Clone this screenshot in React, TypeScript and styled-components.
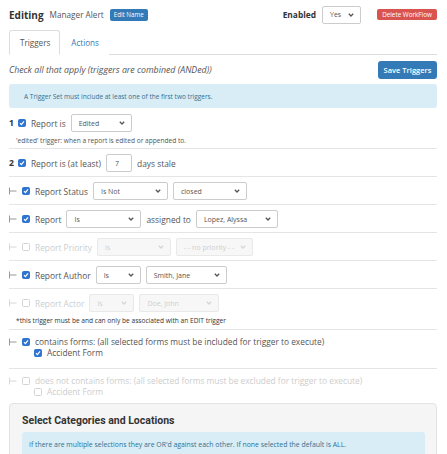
import React from "react";
import styled, { createGlobalStyle } from "styled-components";

const GlobalStyle = createGlobalStyle`
  html, body {
    margin: 0;
    padding: 0;
    background: #fff;
  }
  body {
    font-family: "Open Sans", "Liberation Sans", sans-serif;
    color: #555;
  }
`;

const Page = styled.div`
  padding: 6px 10px 0 9px;
  height: 454px;
  overflow: hidden;
  box-sizing: border-box;
`;

const Header = styled.div`
  display: flex;
  align-items: center;
  height: 17px;
`;

const Title = styled.span`
  font-size: 10px;
  font-weight: 700;
  color: #333;
  margin-right: 6px;
`;

const Subtitle = styled.span`
  font-size: 8.2px;
  color: #555;
  margin-right: 6px;
`;

const Badge = styled.span`
  display: inline-flex;
  align-items: center;
  height: 12px;
  padding: 0 4px;
  background: #337ab7;
  color: #fff;
  font-size: 6.2px;
  border-radius: 2px;
`;

const HeaderRight = styled.div`
  margin-left: auto;
  display: flex;
  align-items: center;
`;

const EnabledLabel = styled.span`
  font-size: 8.4px;
  font-weight: 700;
  color: #333;
  margin-right: 6px;
`;

const DangerButton = styled.button`
  margin-left: 16px;
  height: 11px;
  width: 60px;
  padding: 0;
  border: none;
  border-radius: 2px;
  background: #d9534f;
  color: #fff;
  font-family: inherit;
  font-size: 6.3px;
  line-height: 11px;
`;

const SelectBox = styled.div<{ $w: number; $disabled?: boolean }>`
  box-sizing: border-box;
  width: ${(p) => p.$w}px;
  height: 18px;
  display: flex;
  align-items: center;
  justify-content: space-between;
  padding: 0 6px 0 7px;
  border: 1px solid ${(p) => (p.$disabled ? "#e9e9e9" : "#ccc")};
  border-radius: 2px;
  background: ${(p) => (p.$disabled ? "#f7f7f7" : "#fff")};
  color: ${(p) => (p.$disabled ? "#cfcfcf" : "#555")};
  font-size: 7px;
  flex-shrink: 0;
  white-space: nowrap;

  svg {
    flex-shrink: 0;
  }
`;

const Chevron = ({ color }: { color: string }) => (
  <svg width="6" height="4" viewBox="0 0 6 4">
    <path d="M0.8 0.8 L3 3 L5.2 0.8" fill="none" stroke={color} strokeWidth="1.3" />
  </svg>
);

const Select = ({ value, width, disabled }: { value: string; width: number; disabled?: boolean }) => (
  <SelectBox $w={width} $disabled={disabled}>
    <span>{value}</span>
    <Chevron color={disabled ? "#d6d6d6" : "#555"} />
  </SelectBox>
);

const TabBar = styled.div`
  display: flex;
  margin-top: 7px;
  border-bottom: 1px solid #ddd;
`;

const Tab = styled.div<{ $active?: boolean }>`
  box-sizing: border-box;
  height: 25px;
  margin-bottom: -1px;
  padding: 0 9px 0 10px;
  display: flex;
  align-items: center;
  font-size: 8.1px;
  color: ${(p) => (p.$active ? "#555" : "#337ab7")};
  background: #fff;
  border: 1px solid ${(p) => (p.$active ? "#ddd" : "transparent")};
  border-bottom-color: ${(p) => (p.$active ? "#fff" : "transparent")};
  border-radius: 3px 3px 0 0;
`;

const Toolbar = styled.div`
  display: flex;
  align-items: center;
  justify-content: space-between;
  margin-top: 6px;
`;

const Hint = styled.span`
  font-size: 8.8px;
  font-style: italic;
  color: #555;
`;

const PrimaryButton = styled.button`
  width: 59px;
  height: 18px;
  padding: 0;
  border: none;
  border-radius: 3px;
  background: #337ab7;
  color: #fff;
  font-family: inherit;
  font-size: 7.5px;
  font-weight: 600;
`;

const Alert = styled.div<{ $pad: number; $size: number }>`
  box-sizing: border-box;
  height: 24px;
  display: flex;
  align-items: center;
  padding: 0 ${(p) => p.$pad}px;
  background: #d9edf7;
  border-radius: 3px;
  color: #31708f;
  font-size: ${(p) => p.$size}px;
  white-space: nowrap;
`;

const TopAlert = styled(Alert)`
  margin-top: 5px;
  margin-bottom: 6px;
`;

const TriggerRow = styled.div<{ $first?: boolean }>`
  padding: ${(p) => (p.$first ? "0 0 3px" : "5px 0 4px")};
  border-top: ${(p) => (p.$first ? "none" : "1px solid #e5e5e5")};
`;

const Line = styled.div<{ $gap?: number }>`
  display: flex;
  align-items: center;
  gap: ${(p) => p.$gap ?? 5}px;
  height: 18px;
`;

const TextLine = styled.div<{ $indent?: number }>`
  display: flex;
  align-items: center;
  gap: 5px;
  height: 11px;
  padding-left: ${(p) => p.$indent ?? 0}px;
`;

const Num = styled.span`
  font-size: 8.6px;
  font-weight: 700;
  color: #333;
  margin-right: -1px;
`;

const Label = styled.span<{ $disabled?: boolean; $size?: number }>`
  font-size: ${(p) => p.$size ?? 8.4}px;
  color: ${(p) => (p.$disabled ? "#cdcdcd" : "#555")};
  white-space: nowrap;
`;

const Help = styled.div<{ $dark?: boolean }>`
  margin-top: 4px;
  height: 9px;
  line-height: 9px;
  padding-left: 7px;
  font-size: 6.6px;
  color: ${(p) => (p.$dark ? "#333" : "#555")};
  white-space: nowrap;
`;

const NumInput = styled.div`
  box-sizing: border-box;
  width: 26px;
  height: 18px;
  padding-left: 8px;
  display: flex;
  align-items: center;
  border: 1px solid #ccc;
  border-radius: 2px;
  font-size: 7px;
  color: #555;
`;

const Box = styled.span<{ $checked?: boolean; $disabled?: boolean }>`
  box-sizing: border-box;
  width: 8px;
  height: 8px;
  flex-shrink: 0;
  display: inline-flex;
  align-items: center;
  justify-content: center;
  border-radius: 1.5px;
  background: ${(p) => (p.$checked ? "#2f74d0" : "#fff")};
  border: 1px solid
    ${(p) => (p.$checked ? "#2f74d0" : p.$disabled ? "#d4d4d4" : "#999")};
`;

const Check = ({ checked, disabled }: { checked?: boolean; disabled?: boolean }) => (
  <Box $checked={checked} $disabled={disabled}>
    {checked && (
      <svg width="6" height="6" viewBox="0 0 6 6">
        <path d="M1 3.2 L2.4 4.6 L5 1.4" fill="none" stroke="#fff" strokeWidth="1.2" />
      </svg>
    )}
  </Box>
);

const BranchMark = styled.svg`
  flex-shrink: 0;
`;

const Branch = ({ disabled }: { disabled?: boolean }) => (
  <BranchMark width="8" height="8" viewBox="0 0 8 8">
    <path
      d="M0.5 0.5 V7.5 M0.5 4 H7.5"
      fill="none"
      stroke={disabled ? "#d8d8d8" : "#999"}
      strokeWidth="1"
    />
  </BranchMark>
);

const FormsRow = styled.div<{ $last?: boolean }>`
  padding: ${(p) => (p.$last ? "6px 0 6px" : "6px 0 10px")};
  border-top: 1px solid #e5e5e5;
`;

const Well = styled.div`
  padding: 10px 11px 12px 12px;
  background: #f5f5f5;
  border: 1px solid #e3e3e3;
  border-radius: 4px;
`;

const WellTitle = styled.div`
  font-family: Roboto, "Liberation Sans", sans-serif;
  font-size: 10.5px;
  font-weight: 700;
  color: #333;
  height: 14px;
  line-height: 14px;
  margin-bottom: 4px;
`;

export default function App() {
  return (
    <>
      <GlobalStyle />
      <Page>
        <Header>
          <Title>Editing</Title>
          <Subtitle>Manager Alert</Subtitle>
          <Badge>Edit Name</Badge>
          <HeaderRight>
            <EnabledLabel>Enabled</EnabledLabel>
            <Select value="Yes" width={39} />
            <DangerButton>Delete WorkFlow</DangerButton>
          </HeaderRight>
        </Header>

        <TabBar>
          <Tab $active>Triggers</Tab>
          <Tab>Actions</Tab>
        </TabBar>

        <Toolbar>
          <Hint>Check all that apply (triggers are combined (ANDed))</Hint>
          <PrimaryButton>Save Triggers</PrimaryButton>
        </Toolbar>

        <TopAlert $pad={15} $size={6.5}>
          A Trigger Set must include at least one of the first two triggers.
        </TopAlert>

        <TriggerRow $first>
          <Line>
            <Num>1</Num>
            <Check checked />
            <Label>Report is</Label>
            <Select value="Edited" width={61} />
          </Line>
          <Help>'edited' trigger: when a report is edited or appended to.</Help>
        </TriggerRow>

        <TriggerRow>
          <Line>
            <Num>2</Num>
            <Check checked />
            <Label>Report is (at least)</Label>
            <NumInput>7</NumInput>
            <Label>days stale</Label>
          </Line>
        </TriggerRow>

        <TriggerRow>
          <Line>
            <Branch />
            <Check checked />
            <Label>Report Status</Label>
            <Select value="Is Not" width={75} />
            <Select value="closed" width={74} />
          </Line>
        </TriggerRow>

        <TriggerRow>
          <Line>
            <Branch />
            <Check checked />
            <Label>Report</Label>
            <Select value="Is" width={75} />
            <Label>assigned to</Label>
            <Select value="Lopez, Alyssa" width={82} />
          </Line>
        </TriggerRow>

        <TriggerRow>
          <Line>
            <Branch disabled />
            <Check disabled />
            <Label $disabled>Report Priority</Label>
            <Select value="Is" width={74} disabled />
            <Select value="- - no priority - -" width={77} disabled />
          </Line>
        </TriggerRow>

        <TriggerRow>
          <Line>
            <Branch />
            <Check checked />
            <Label>Report Author</Label>
            <Select value="Is" width={45} />
            <Select value="Smith, Jane" width={81} />
          </Line>
        </TriggerRow>

        <TriggerRow>
          <Line>
            <Branch disabled />
            <Check disabled />
            <Label $disabled>Report Actor</Label>
            <Select value="Is" width={45} disabled />
            <Select value="Doe, John" width={80} disabled />
          </Line>
          <Help $dark>*this trigger must be and can only be associated with an EDIT trigger</Help>
        </TriggerRow>

        <FormsRow>
          <TextLine>
            <Branch />
            <Check checked />
            <Label $size={8.35}>
              contains forms: (all selected forms must be included for trigger to execute)
            </Label>
          </TextLine>
          <TextLine $indent={25}>
            <Check checked />
            <Label $size={8.35}>Accident Form</Label>
          </TextLine>
        </FormsRow>

        <FormsRow $last>
          <TextLine>
            <Branch disabled />
            <Check disabled />
            <Label $size={8.35} $disabled>
              does not contains forms: (all selected forms must be excluded for trigger to execute)
            </Label>
          </TextLine>
          <TextLine $indent={25}>
            <Check disabled />
            <Label $size={8.35} $disabled>
              Accident Form
            </Label>
          </TextLine>
        </FormsRow>

        <Well>
          <WellTitle>Select Categories and Locations</WellTitle>
          <Alert $pad={7} $size={6.9}>
            If there are multiple selections they are OR'd against each other. If none selected the default is ALL.
          </Alert>
        </Well>
      </Page>
    </>
  );
}
